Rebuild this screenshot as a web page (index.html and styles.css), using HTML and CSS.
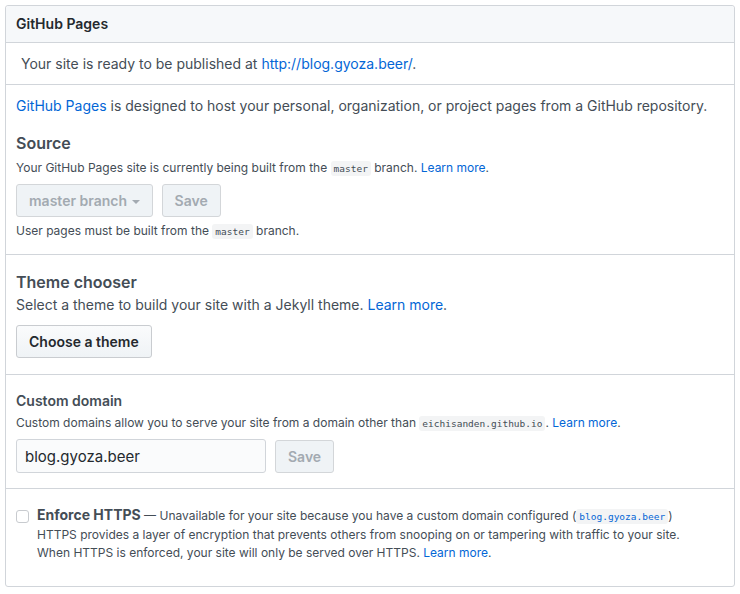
FILE: index.html
```html
<!DOCTYPE html>
<html>
<head>
<meta charset="utf-8">
<link rel="stylesheet" href="styles.css">
</head>
<body>
<div class="box">
  <div class="box-header">GitHub Pages</div>
  <div class="flash">Your site is ready to be published at <a href="#">http://blog.gyoza.beer/</a>.</div>
  <div class="section first">
    <p class="intro"><a href="#">GitHub Pages</a> is designed to host your personal, organization, or project pages from a GitHub repository.</p>
    <h3 class="h-lg">Source</h3>
    <p class="note source-note">Your GitHub Pages site is currently being built from the <code>master</code> branch. <a href="#">Learn more</a>.</p>
    <div class="row source-row">
      <button class="btn disabled">master branch <span class="caret"></span></button>
      <button class="btn disabled">Save</button>
    </div>
    <p class="note">User pages must be built from the <code>master</code> branch.</p>
  </div>
  <div class="section theme">
    <h3 class="h-lg">Theme chooser</h3>
    <p class="desc">Select a theme to build your site with a Jekyll theme. <a href="#">Learn more</a>.</p>
    <div class="row"><button class="btn">Choose a theme</button></div>
  </div>
  <div class="section domain">
    <h3 class="h-sm">Custom domain</h3>
    <p class="note">Custom domains allow you to serve your site from a domain other than <code>eichisanden.github.io</code>. <a href="#">Learn more</a>.</p>
    <div class="row">
      <input class="input" type="text" value="blog.gyoza.beer">
      <button class="btn disabled">Save</button>
    </div>
  </div>
  <div class="section https">
    <div class="check-row">
      <span class="checkbox"></span>
      <div class="check-text">
        <strong>Enforce HTTPS</strong> — Unavailable for your site because you have a custom domain configured (<code class="blue">blog.gyoza.beer</code>)<br>
        HTTPS provides a layer of encryption that prevents others from snooping on or tampering with traffic to your site.<br>
        When HTTPS is enforced, your site will only be served over HTTPS. <a href="#">Learn more</a>.
      </div>
    </div>
  </div>
</div>
</body>
</html>
```

FILE: styles.css
```css
* { box-sizing: border-box; }
body {
  margin: 0;
  padding: 5px;
  font-family: Inter, "Liberation Sans", Arial, sans-serif;
  color: #444d56;
  background: #fff;
}
a { color: #0366d6; text-decoration: none; }
p { margin: 0; }
h3 { margin: 0; }
code {
  font-family: "DejaVu Sans Mono", monospace;
  font-size: 9.5px;
  background: #f3f4f5;
  border-radius: 3px;
  padding: 2px 3px;
  color: #444d56;
}
code.blue { color: #0366d6; }
.box {
  width: 730px;
  border: 1px solid #d1d5da;
  border-radius: 3px;
}
.box-header {
  height: 37px;
  background: #f6f8fa;
  border-bottom: 1px solid #d1d5da;
  padding: 0 10px;
  font-size: 14px;
  font-weight: 600;
  color: #24292e;
  line-height: 36px;
  border-radius: 3px 3px 0 0;
}
.flash {
  height: 42px;
  border-bottom: 1px solid #d1d5da;
  padding: 0 15px;
  font-size: 14px;
  line-height: 41px;
}
.section {
  padding: 0 10px;
  border-bottom: 1px solid #d1d5da;
}
.section:last-child { border-bottom: 0; }
.first { height: 170px; padding-top: 11px; }
.intro { font-size: 14px; line-height: 20px; }
.h-lg { font-size: 16px; font-weight: 600; line-height: 20px; color: #444d56; }
.first .h-lg { margin-top: 17px; }
.h-sm { font-size: 14px; font-weight: 600; line-height: 18px; }
.note { font-size: 12px; line-height: 18px; }
.desc { font-size: 14px; line-height: 20px; }
.row { display: flex; gap: 9px; align-items: center; }
.source-note { margin-top: 6px; }
.source-row { margin: 6px 0 5px; }
.btn {
  height: 33px;
  padding: 0 12px;
  font-family: inherit;
  font-size: 14px;
  font-weight: 600;
  color: #24292e;
  background: linear-gradient(#fafbfc, #eff3f6);
  border: 1px solid #c9ccd0;
  border-radius: 3px;
}
.btn.disabled {
  background: #eff3f6;
  color: #a3aab1;
  border-color: #d3d6d9;
}
.caret {
  display: inline-block;
  width: 0; height: 0;
  border-left: 4px solid transparent;
  border-right: 4px solid transparent;
  border-top: 4px solid #a3aab1;
  vertical-align: middle;
  margin-left: 1px;
}
.theme { height: 120px; padding-top: 17px; }
.theme .desc { margin-top: 3px; }
.theme .row { margin-top: 10px; }
.domain { height: 114px; padding-top: 17px; }
.domain .note { margin-top: 4px; }
.domain .row { margin-top: 6px; }
.input {
  width: 250px;
  height: 34px;
  border: 1px solid #d1d5da;
  border-radius: 3px;
  background: #fafbfc;
  padding: 0 8px;
  font-family: inherit;
  font-size: 15px;
  color: #24292e;
}
.https { height: 97px; padding-top: 17px; }
.check-row { display: flex; gap: 8px; }
.checkbox {
  width: 13px; height: 13px;
  margin-top: 4px;
  border: 1px solid #c8cbcf;
  border-radius: 3px;
  background: #fff;
  flex: none;
}
.check-text { font-size: 12px; line-height: 18px; }
.check-text strong { font-size: 14px; color: #444d56; }
```
